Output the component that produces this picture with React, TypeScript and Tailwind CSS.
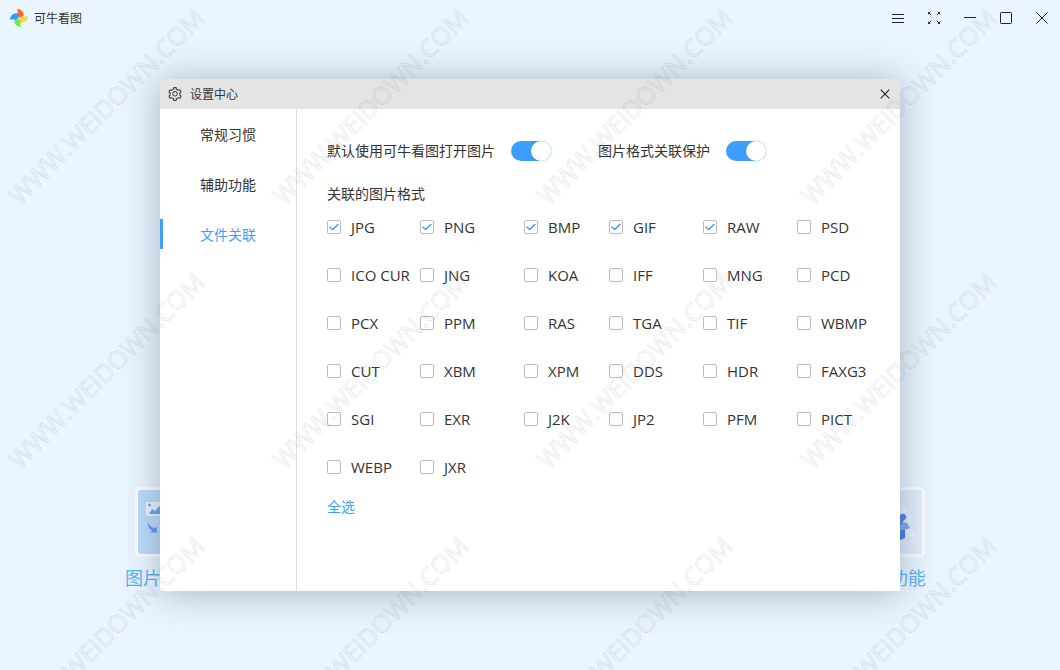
import { useState } from "react";
import { AiOutlineSetting } from "react-icons/ai";

const formats = [
  "JPG", "PNG", "BMP", "GIF", "RAW", "PSD",
  "ICO CUR", "JNG", "KOA", "IFF", "MNG", "PCD",
  "PCX", "PPM", "RAS", "TGA", "TIF", "WBMP",
  "CUT", "XBM", "XPM", "DDS", "HDR", "FAXG3",
  "SGI", "EXR", "J2K", "JP2", "PFM", "PICT",
  "WEBP", "JXR",
];

const tabs = ["常规习惯", "辅助功能", "文件关联"];

const blades = ["#ff6433", "#ffd250", "#6fe948", "#2b9df8"];

function Logo() {
  return (
    <svg width="18" height="18" viewBox="0 0 18 18" aria-hidden="true">
      {blades.map((color, i) => (
        <path
          key={color}
          d="M7 0C12 .3 14.600 3.500 13.200 8L9.600 8.800C9.300 7.300 7.700 6.800 6.800 5.600C8 4 8 2 7 0Z"
          fill={color}
          transform={`rotate(${i * 90} 9 9)`}
        />
      ))}
    </svg>
  );
}

const controls = [
  {
    label: "菜单",
    icon: <path d="M0 2.500H12M0 6.500H12M0 10.500H12" />,
  },
  {
    label: "全屏",
    icon: (
      <>
        <path d="M1 1L3.200 3.200M11 1L8.800 3.200M1 11L3.200 8.800M11 11L8.800 8.800" />
        <path d="M0 0H2.500L0 2.500ZM12 0H9.500L12 2.500ZM0 12H2.500L0 9.500ZM12 12H9.500L12 9.500Z" fill="#222" stroke="none" />
      </>
    ),
  },
  { label: "最小化", icon: <path d="M0 5.500H12" /> },
  { label: "最大化", icon: <rect x=".5" y=".5" width="11" height="11" rx=".8" /> },
  { label: "关闭", icon: <path d="M.5 .5L11.500 11.500M11.500 .5L.5 11.500" /> },
];

function Toggle({ label }: { label: string }) {
  const [on, setOn] = useState(true);
  return (
    <label className="flex items-start gap-4">
      <span className="leading-[18px]">{label}</span>
      <input
        type="checkbox"
        role="switch"
        checked={on}
        onChange={() => setOn(!on)}
        className="h-5 w-10 appearance-none rounded-full bg-gray-300 before:block before:size-5 before:rounded-full before:bg-white before:shadow-[0_0_3px_rgba(64,120,180,0.3)] checked:bg-[#3d9efe] checked:before:translate-x-5"
      />
    </label>
  );
}

function FormatBox({ name, initial }: { name: string; initial: boolean }) {
  const [on, setOn] = useState(initial);
  return (
    <label className="flex items-center gap-2.5 whitespace-nowrap">
      <span className="grid size-3.5 shrink-0">
        <input
          type="checkbox"
          checked={on}
          onChange={() => setOn(!on)}
          className="col-start-1 row-start-1 size-3.5 appearance-none rounded-xs border border-[#bbbbbb] bg-white"
        />
        {on && (
          <svg viewBox="0 0 14 14" className="pointer-events-none col-start-1 row-start-1 size-3.5" fill="none" stroke="#3d9efe" strokeWidth="1.500" aria-hidden="true">
            <path d="M2.500 6.800L5.700 9.500L11.300 4" />
          </svg>
        )}
      </span>
      <span className="font-['Open_Sans','Noto_Sans_CJK_SC',sans-serif] text-[15px] leading-5">{name}</span>
    </label>
  );
}

function Watermark() {
  return (
    <div className="pointer-events-none absolute inset-0 z-20 overflow-hidden" aria-hidden="true">
      <div className="grid auto-rows-[212px] grid-cols-[repeat(auto-fill,212px)] gap-[52px]">
        {Array.from({ length: 12 }, (_, i) => (
          <div key={i} className="flex items-center justify-center">
            <span className="-rotate-45 font-['Open_Sans',sans-serif] text-[25px] leading-6 font-medium whitespace-nowrap text-transparent [-webkit-text-stroke:1px_rgba(80,90,100,0.13)]">
              WWW.WEIDOWN.COM
            </span>
          </div>
        ))}
      </div>
    </div>
  );
}

function ConvertCard() {
  return (
    <svg width="70" height="70" viewBox="0 0 70 70" aria-hidden="true">
      <rect x="1.500" y="1.500" width="67" height="67" rx="4" fill="#bddbfb" stroke="#fdfeff" strokeWidth="3" />
      <rect x="11" y="15" width="30" height="14" rx=".5" fill="#edf4fe" />
      <circle cx="14.500" cy="18" r="1.500" fill="#69a5ee" />
      <path d="M14 27L17 22L20 24L24 19L29 25L32 22L37 27Z" fill="#69a5ee" />
      <path d="M13 35C12.500 39 14 42 17 43.500L15.500 45.500H22V39.500L20.300 41C17 41 14.500 39 13 35Z" fill="#5e9dee" />
    </svg>
  );
}

function ToolsCard() {
  return (
    <svg width="70" height="70" viewBox="0 0 70 70" aria-hidden="true">
      <defs>
        <linearGradient id="tools" x1="0" y1="0" x2="1" y2="0">
          <stop offset=".5" stopColor="#dbe9f9" />
          <stop offset="1" stopColor="#e6f0fb" />
        </linearGradient>
      </defs>
      <rect x="1.500" y="1.500" width="67" height="67" rx="4" fill="url(#tools)" stroke="#fdfeff" strokeWidth="3" />
      <path d="M36 41H50V51L46 53H36Z" fill="#3f7de0" />
      <path d="M38 45L44 34L52 36L55 41L48 43Z" fill="#7fa3ef" />
      <path d="M40 40L44 30C45 26 50 26 51 29C52 32 49 33 47.500 35L46 38Z" fill="#4a80e4" />
      <path d="M49.500 19L50.300 22.200L53 23L50.300 23.800L49.500 27L48.700 23.800L46 23L48.700 22.200ZM57.500 44L58.300 47.200L61 48L58.300 48.800L57.500 52L56.700 48.800L54 48L56.700 47.200Z" fill="#fbf9f9" />
    </svg>
  );
}

export default function App() {
  const [tab, setTab] = useState(2);
  return (
    <div className="relative flex min-h-screen flex-col overflow-hidden bg-[#eaf5ff] font-['Noto_Sans_CJK_SC',sans-serif] text-sm text-[#333333]">
      <header className="flex h-9 items-center justify-between pr-3 pl-2.5">
        <div className="flex items-center gap-1.5">
          <Logo />
          <h1 className="text-xs">可牛看图</h1>
        </div>
        <div className="flex gap-6">
          {controls.map((c) => (
            <button key={c.label} aria-label={c.label} className="size-3">
              <svg width="12" height="12" viewBox="0 0 12 12" fill="none" stroke="#222" strokeWidth="1" aria-hidden="true">
                {c.icon}
              </svg>
            </button>
          ))}
        </div>
      </header>

      <div className="grid flex-1 grid-cols-[1fr_740px_1fr] grid-rows-[auto_1fr] pt-[43px]">
        <div className="col-start-1 row-start-1 -mr-[55px] flex w-[90px] flex-col items-center gap-2 self-end justify-self-end pb-0.5 text-lg leading-6 text-[#5bb0fb]">
          <ConvertCard />
          <span className="self-start">图片</span>
        </div>
        <div className="col-start-3 row-start-1 -ml-[46px] flex w-[72px] flex-col items-center gap-2 self-end pb-0.5 text-lg leading-6 text-[#5bb0fb]">
          <ToolsCard />
          <span className="self-end">功能</span>
        </div>

        <section
          role="dialog"
          aria-label="设置中心"
          className="z-10 col-start-2 row-start-1 flex min-h-[512px] flex-col bg-white shadow-[0_2px_36px_rgba(70,90,110,0.42)]"
        >
          <div className="flex h-[30px] items-center justify-between bg-[#e4e4e4] pr-2.5 pl-[7px]">
            <div className="flex items-center gap-[7px]">
              <AiOutlineSetting size={16} color="#444" aria-hidden="true" />
              <h2 className="text-xs">设置中心</h2>
            </div>
            <button aria-label="关闭设置" className="size-2.5">
              <svg width="10" height="10" viewBox="0 0 10 10" stroke="#222" strokeWidth="1.100" aria-hidden="true">
                <path d="M.7 .7L9.300 9.300M9.300 .7L.7 9.300" />
              </svg>
            </button>
          </div>
          <div className="flex flex-1">
            <nav className="flex w-[137px] flex-col gap-5 border-r border-[#dddddd] pt-2.5">
              {tabs.map((t, i) => (
                <button
                  key={t}
                  onClick={() => setTab(i)}
                  className={
                    i === tab
                      ? "h-[30px] border-l-3 border-[#3d9efe] pr-[3px] text-[#3d9efe]"
                      : "h-[30px] border-l-3 border-transparent pr-[3px]"
                  }
                >
                  {t}
                </button>
              ))}
            </nav>
            <div className="flex-1 pt-8 pl-[30px]">
              <div className="flex gap-[47px]">
                <Toggle label="默认使用可牛看图打开图片" />
                <Toggle label="图片格式关联保护" />
              </div>
              <h3 className="mt-[22px]">关联的图片格式</h3>
              <div className="grid auto-rows-[48px] grid-cols-[93px_104px_85px_94px_94px_1fr]">
                {formats.map((f, i) => (
                  <FormatBox key={f} name={f} initial={i < 5} />
                ))}
              </div>
              <button className="mt-[5px] text-[#3d9efe]">全选</button>
            </div>
          </div>
        </section>
      </div>
      <Watermark />
    </div>
  );
}
